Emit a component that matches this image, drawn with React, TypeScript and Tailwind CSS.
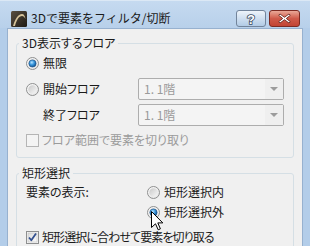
import React from "react";

const JP =
  "font-[family-name:'Noto_Sans_CJK_JP','Noto_Sans',sans-serif] [font-feature-settings:'palt'] text-[12px] leading-[16px]";
const JP_TITLE =
  "font-[family-name:'Noto_Sans_CJK_JP','Noto_Sans',sans-serif] text-[12px] leading-[16px]";

function Radio({ checked }: { checked?: boolean }) {
  return (
    <svg width="13" height="13" viewBox="0 0 13 13" className="shrink-0">
      <defs>
        <linearGradient id="rOuter" x1="0" y1="0" x2="1" y2="1">
          <stop offset="0" stopColor="#fbfbfb" />
          <stop offset="1" stopColor="#e2e2e2" />
        </linearGradient>
        <linearGradient id="rInner" x1="0" y1="0" x2="1" y2="1">
          <stop offset="0" stopColor="#c9c9c9" />
          <stop offset="1" stopColor="#f7f7f7" />
        </linearGradient>
        <radialGradient id="rDot" cx="0.4" cy="0.35" r="0.7">
          <stop offset="0" stopColor="#b9e3ff" />
          <stop offset="0.45" stopColor="#3c9be0" />
          <stop offset="1" stopColor="#0d4a88" />
        </radialGradient>
      </defs>
      <circle cx="6.5" cy="6.5" r="6" fill="url(#rOuter)" stroke="#8e8f8f" strokeWidth="1" />
      <circle cx="6.5" cy="6.5" r="4.2" fill="url(#rInner)" />
      {checked && <circle cx="6.5" cy="6.5" r="3.6" fill="url(#rDot)" stroke="#1a4f86" strokeWidth="0.6" />}
    </svg>
  );
}

function Check({ checked, disabled }: { checked?: boolean; disabled?: boolean }) {
  return (
    <svg width="13" height="13" viewBox="0 0 13 13" className="shrink-0">
      <defs>
        <linearGradient id="cIn" x1="0" y1="0" x2="1" y2="1">
          <stop offset="0" stopColor="#dcdcdc" />
          <stop offset="1" stopColor="#fbfbfb" />
        </linearGradient>
      </defs>
      <rect
        x="0.5"
        y="0.5"
        width="12"
        height="12"
        fill={disabled ? "#f4f4f4" : "#f6f6f6"}
        stroke={disabled ? "#b5b5b5" : "#8e8f8f"}
      />
      {!disabled && <rect x="2" y="2" width="9" height="9" fill="url(#cIn)" stroke="#b9b9b9" strokeWidth="0.5" />}
      {checked && (
        <path d="M3 6.5 L5.3 9.3 L10 2.6" fill="none" stroke="#33508f" strokeWidth="1.8" strokeLinejoin="round" />
      )}
    </svg>
  );
}

function Dropdown({ text }: { text: string }) {
  return (
    <div className="flex h-[22px] w-[146px] border border-[#adadad] rounded-[2px] bg-[#f4f4f4]">
      <div className={`${JP} flex-1 flex items-center pl-[5px] text-[#9a9a9a]`}>{text}</div>
      <div className="w-[18px] flex items-center justify-center bg-[#efefef]">
        <svg width="8" height="4" viewBox="0 0 8 4">
          <path d="M0 0 H8 L4 4 Z" fill="#9c9c9c" />
        </svg>
      </div>
    </div>
  );
}

export default function App() {
  return (
    <div className="relative w-[310px] h-[246px] overflow-hidden bg-[#b3cde9] flex flex-col">
      {/* title bar */}
      <div className="h-[28px] shrink-0 flex items-start pt-[10px] pl-[11px] pr-[10px] bg-gradient-to-b from-[#c5daf0] to-[#b8d0ea] border-t border-[#dbe8f5]">
        <svg width="16" height="16" viewBox="0 0 16 16" className="shrink-0">
          <defs>
            <linearGradient id="icBg" x1="0" y1="0" x2="1" y2="1">
              <stop offset="0" stopColor="#5a4f40" />
              <stop offset="1" stopColor="#1e1a14" />
            </linearGradient>
          </defs>
          <rect x="0" y="0" width="16" height="16" rx="1.5" fill="url(#icBg)" />
          <path d="M2 15 C4 8 7 3 11 3 C13 3 14 5 14.5 8 C13.5 6 12.5 5 11 5 C8 5 5.5 9 4 15 Z" fill="#d6c39a" />
        </svg>
        <div className={`${JP_TITLE} ml-[4px] -mt-[1px] text-[#1b1b1b]`}>3Dで要素をフィルタ/切断</div>
        <div className="flex-1" />
        <div className="w-[30px] h-[17px] -mt-[1px] rounded-[3px] border border-[#72849b] bg-gradient-to-b from-[#eef4fa] via-[#cfdff0] to-[#b2cbe5] flex items-center justify-center">
          <svg width="12" height="14" viewBox="0 0 12 14">
            <text
              x="6"
              y="12"
              textAnchor="middle"
              fontSize="13"
              fontWeight="bold"
              fontFamily="Liberation Sans, Arial, sans-serif"
              fill="#ffffff"
              stroke="#3a4a60"
              strokeWidth="1.6"
              paintOrder="stroke"
            >
              ?
            </text>
          </svg>
        </div>
        <div className="w-[31px] h-[17px] -mt-[1px] ml-[3px] rounded-[3px] border border-[#7d2b23] bg-gradient-to-b from-[#e9a898] via-[#cf5a4a] to-[#c24434] flex items-center justify-center">
          <svg width="13" height="11" viewBox="0 0 13 11">
            <path
              d="M2 1 L6.5 4.3 L11 1 L12.3 2.3 L8.3 5.5 L12.3 8.7 L11 10 L6.5 6.7 L2 10 L0.7 8.7 L4.7 5.5 L0.7 2.3 Z"
              fill="#ffffff"
              stroke="#5a1a14"
              strokeWidth="0.8"
              strokeLinejoin="round"
            />
          </svg>
        </div>
      </div>

      {/* client */}
      <div className="flex-1 mx-[7px] border border-b-0 border-[#97b1cf] bg-[#f0f0f0] pl-[8px] pr-[8px] pt-[6px] text-[#1b1b1b]">
        <fieldset className="border border-[#d5dfe5] rounded-[3px] p-0 m-0">
          <legend className={`${JP} ml-[2px] px-[3px]`}>3D表示するフロア</legend>
          <div className="pl-[9px] pr-[9px] pt-[2px] pb-[7px] flex flex-col">
            <div className="h-[20px] flex items-center gap-[4px]">
              <Radio checked />
              <span className={JP}>無限</span>
            </div>
            <div className="mt-[5px] h-[22px] grid grid-cols-[112px_1fr] items-center">
              <div className="flex items-center gap-[4px]">
                <Radio />
                <span className={JP}>開始フロア</span>
              </div>
              <Dropdown text="1. 1階" />
            </div>
            <div className="mt-[4px] h-[22px] grid grid-cols-[112px_1fr] items-center">
              <span className={`${JP} pl-[17px]`}>終了フロア</span>
              <Dropdown text="1. 1階" />
            </div>
            <div className="mt-[4px] h-[20px] flex items-center gap-[3px]">
              <Check disabled />
              <span className={`${JP} text-[#9b9b9b]`}>フロア範囲で要素を切り取り</span>
            </div>
          </div>
        </fieldset>

        <fieldset className="mt-[7px] border border-[#d5dfe5] rounded-[3px] p-0 m-0 h-[100px]">
          <legend className={`${JP} ml-[2px] px-[3px]`}>矩形選択</legend>
          <div className="pl-[9px] pr-[9px] pt-[1px] flex flex-col">
            <div className="h-[20px] grid grid-cols-[121px_1fr] items-center">
              <span className={JP}>要素の表示:</span>
              <div className="flex items-center gap-[4px]">
                <Radio />
                <span className={JP}>矩形選択内</span>
              </div>
            </div>
            <div className="h-[20px] grid grid-cols-[121px_1fr] items-center">
              <span />
              <div className="flex items-center gap-[4px]">
                <Radio checked />
                <span className={JP}>矩形選択外</span>
              </div>
            </div>
            <div className="mt-[5px] h-[20px] flex items-center gap-[3px]">
              <Check checked />
              <span className={`${JP} tracking-[-0.9px]`}>矩形選択に合わせて要素を切り取る</span>
            </div>
          </div>
        </fieldset>
      </div>

      {/* mouse cursor */}
      <svg width="13" height="20" viewBox="0 0 13 20" className="absolute left-[151px] top-[211px]">
        <path
          d="M0.5 0.5 L0.5 16.5 L4.5 12.8 L7.2 18.8 L9.4 17.8 L6.8 11.9 L11.8 11.9 Z"
          fill="#ffffff"
          stroke="#000000"
          strokeWidth="1"
          strokeLinejoin="miter"
        />
      </svg>
    </div>
  );
}
